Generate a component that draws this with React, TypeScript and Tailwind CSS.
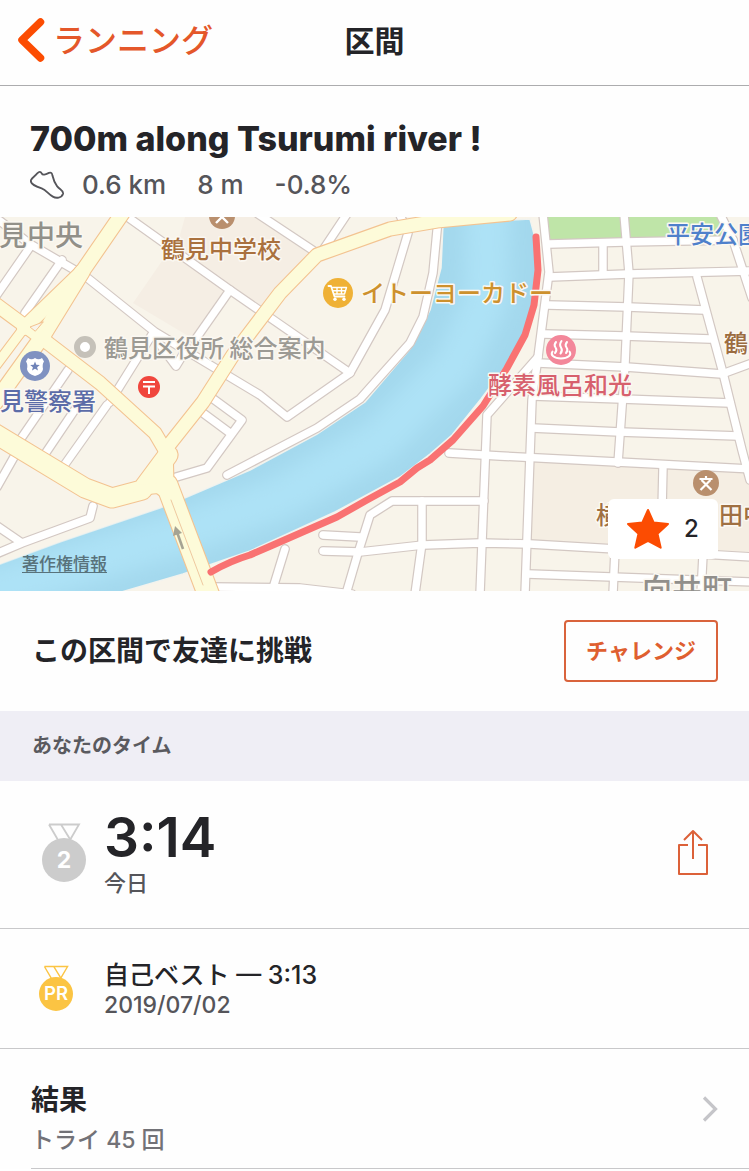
import React from "react";

const minorRoads: string[] = [
  "M0 221L30 244L85 276L155 332L260 395L287 417L350 373",
  "M122 213L230 290L350 373L385 310L408 233L400 215",
  "M230 290L195 340",
  "M30 247L-4 296",
  "M62 260L25 313",
  "M153 333L110 402",
  "M153 335L176 366L187 348",
  "M68 370L20 440",
  "M76 408L43 457",
  "M107 405L63 467",
  "M14 457L-3 487",
  "M93 506L90 518L22 543L-4 554M-3 526L22 543",
  "M173 478L207 468L242 420L212 398M203 413L230 433",
  "M227 475L250 463L317 428L360 399L410 343L423 317L433 273L438 220",
  "M258 214L317 253M347 214L323 250",
  "M543 214L549 272L538 357L532 400L525 594",
  "M538 357L487 415L480 594",
  "M624 214L629 273L625 365L618 463",
  "M720 214L733 240L752 298",
  "M697 277L723 373L742 450L750 480",
  "M549 244L624 242L733 240",
  "M549 277L628 274L752 271",
  "M548 305L628 307L704 310",
  "M544 334L625 336L710 339",
  "M538 363L626 367L722 374L752 363",
  "M533 396L622 399L730 403",
  "M532 428L620 432L738 436",
  "M449 453L500 456L617 462L752 469",
  "M323 551L360 552L423 545L480 543L530 544L752 557",
  "M528 574L752 582",
  "M663 467L661 552M615 550L613 594M703 555L701 594",
  "M603 244L603 274",
  "M323 535L360 537",
  "M484 501L392 501L370 515L358 553L346 594",
  "M422 501L422 543L415 594",
  "M285 549L273 588",
  "M212 587L300 588L352 594",
];

const majorRoads: { d: string; w: number }[] = [
  { d: "M124 211L82 272L24 328", w: 14 },
  { d: "M82 272L42 337L-6 404", w: 15 },
  { d: "M24 328L-6 368", w: 9 },
  { d: "M-6 303L40 337L100 383L155 433L165 450", w: 13 },
  { d: "M165 450L203 402L233 355L280 293L317 255L390 229L437 221L510 214", w: 13 },
  { d: "M-6 433L85 488L112 498L142 490L168 455", w: 19 },
  { d: "M138 490L158 488L168 495", w: 10 },
  { d: "M166 448L167 485L206 596", w: 13 },
  { d: "M167 485L209 596", w: 21 },
];

const waterPath =
  "M443 224L530 219L537 245L536 300L524 335L505 367L481 399L452 435L430 454L400 477L335 512L250 551L183 574L118 593L-2 593L-2 565L60 542L160 508L187 497L250 470L317 434L365 402L410 349L430 310L441 268Z";

function MapLabel({ x, y, fill, size = 24, children }: {
  x: number; y: number; fill: string; size?: number; children: React.ReactNode;
}) {
  return (
    <text x={x} y={y} fill={fill} fontSize={size} stroke="#fbf8f2" strokeWidth={3} strokeLinejoin="round" paintOrder="stroke" className="font-medium">
      {children}
    </text>
  );
}

function SegmentMap() {
  return (
    <svg
      viewBox="0 217 749 374"
      preserveAspectRatio="xMidYMid slice"
      role="img"
      aria-label="地図"
      className="block h-[374px] w-full font-['Noto_Sans_CJK_JP',sans-serif]"
    >
      <defs>
        <clipPath id="water"><path d={waterPath} /></clipPath>
        <filter id="soft" x="-20%" y="-20%" width="140%" height="140%"><feGaussianBlur stdDeviation="10" /></filter>
      </defs>
      <rect x="-400" y="217" width="1600" height="374" fill="#f8f4ea" />
      <path d="M185 217H255L317 256L281 290L262 312L230 290L195 340L133 303L180 235Z" fill="#f5eee4" />
      <path d="M533 461L663 467L752 472V556L530 543Z" fill="#f5eee3" />
      <path d="M547 217H622V239L549 243ZM628 217H722L732 237H629Z" fill="#bfe5a8" />

      <path d={waterPath} fill="#a3d8ed" stroke="#f3f3ee" strokeWidth="1.5" />
      <g clipPath="url(#water)">
        <path d="M488 205L486 300L455 365L380 440L280 498L190 530L-20 595" fill="none" stroke="#ade2f6" strokeWidth="44" filter="url(#soft)" />
      </g>

      <g fill="none" strokeLinecap="round" strokeLinejoin="round">
        <g stroke="#d3c8c3" strokeWidth="9.8">{minorRoads.map((d) => <path key={d} d={d} />)}</g>
        <g stroke="#fff" strokeWidth="7.4">{minorRoads.map((d) => <path key={d} d={d} />)}</g>
        <g stroke="#f3c391">{majorRoads.map((r) => <path key={r.d} d={r.d} strokeWidth={r.w + 2.2} />)}</g>
        <g stroke="#fdfbd9">{majorRoads.map((r) => <path key={r.d} d={r.d} strokeWidth={r.w} />)}</g>
        <path d="M43 322L30 327L35 331Z" fill="#f8f4ea" stroke="#f3c391" strokeWidth="1" />
        <path d="M171 500L203 585" stroke="#efc9a0" strokeWidth="1" />
        <path d="M183 549L177 532" stroke="#a5a393" strokeWidth="2.6" strokeLinecap="butt" />
        <path d="M175 526L173 536L182 533Z" fill="#a5a393" />
        <path d="M211 572Q230 561 250 555L273 545L337 517L367 500L400 482L417 468L430 460L453 440L483 406L507 368L525 335L534 305L538 270L536 237" stroke="#f97272" strokeWidth="7" />
      </g>

      <MapLabel x={-1} y={246} size={28} fill="#929089">見中央</MapLabel>
      <MapLabel x={161} y={258} fill="#aa713e">鶴見中学校</MapLabel>
      <MapLabel x={104} y={357} fill="#9c9a94">鶴見区役所 総合案内</MapLabel>
      <MapLabel x={0} y={410} fill="#5c6ca8">見警察署</MapLabel>
      <MapLabel x={361} y={302} fill="#cd912d">イトーヨーカドー</MapLabel>
      <MapLabel x={488} y={394} fill="#d7606d">酵素風呂和光</MapLabel>
      <MapLabel x={666} y={243} fill="#4f80cb">平安公園</MapLabel>
      <MapLabel x={724} y={352} fill="#9b6c41">鶴</MapLabel>
      <MapLabel x={596} y={524} fill="#a07042">横</MapLabel>
      <MapLabel x={719} y={524} fill="#a07042">田中</MapLabel>
      <MapLabel x={642} y={600} size={30} fill="#918f8b">向井町</MapLabel>

      <circle cx="222" cy="216" r="13" fill="#b98f6d" />
      <path d="M216 223L227 212M228 223L217 212" stroke="#fff" strokeWidth="2.4" />

      <circle cx="338" cy="293" r="15" fill="#efb136" />
      <g fill="none" stroke="#fff" strokeWidth="1.8" strokeLinecap="round" strokeLinejoin="round">
        <path d="M328.500 286H331L334.500 296.500H344.500" />
        <path d="M332.500 287.500H346.500L344.500 294H334M333.500 290.700H345.500M337 288V294M341.500 288V294" strokeWidth="1.4" />
      </g>
      <circle cx="335" cy="299.300" r="1.700" fill="#fff" />
      <circle cx="344" cy="299.300" r="1.700" fill="#fff" />

      <circle cx="85" cy="347" r="8" fill="#fff" stroke="#c5c1b9" strokeWidth="6" />

      <circle cx="35" cy="366" r="15" fill="#8092c1" />
      <path d="M28 358Q31.500 360.500 35 358Q38.500 360.500 42 358L44 361.500Q42 364 43 369Q42.500 374 35 376Q27.500 374 27 369Q28 364 26 361.500Z" fill="#fff" />
      <path d="M35 361.500L36.300 364.700L39.800 365L37.100 367.200L38 370.500L35 368.700L32 370.500L32.900 367.200L30.200 365L33.700 364.700Z" fill="#6f83b8" />

      <circle cx="149" cy="387" r="11" fill="#f0463d" />
      <path d="M143 382H155M143 386.500H155M149 386.500V394" stroke="#fff" strokeWidth="2" fill="none" />

      <circle cx="561" cy="350" r="15" fill="#f3879a" />
      <g fill="none" stroke="#fff" strokeWidth="2" strokeLinecap="round">
        <path d="M556 342Q553.500 345 555.500 347.500T555 353M561.500 341Q559 344.500 561 347.500T560.500 353.500M567 342Q564.500 345 566.500 347.500T566 353" />
        <path d="M552.500 351.500C550 355 554 358.500 561 358.500S572 355 569.500 351.500" />
      </g>

      <circle cx="706" cy="483" r="13" fill="#b98f6d" />
      <path d="M699.500 479H712.500M706 476V479M701.500 480L711.500 490M710.500 480L700.500 490" stroke="#fff" strokeWidth="2.200" fill="none" />
    </svg>
  );
}

function Medal({ label, className, labelClass }: { label: string; className: string; labelClass: string }) {
  return (
    <svg viewBox="0 0 44 60" className={className} role="img" aria-label={label}>
      <g fill="none" stroke="currentColor" strokeWidth="1.8">
        <path d="M7 1.500H37L28 17M7 1.500L16 17M19 1.500L28.500 17" />
      </g>
      <circle cx="22" cy="37" r="22" fill="currentColor" />
      <text x="22" y="45" textAnchor="middle" fill="#fff" className={labelClass}>{label}</text>
    </svg>
  );
}

export default function App() {
  return (
    <div className="w-full bg-[#fefefe] font-['Inter','Noto_Sans_CJK_JP',sans-serif] text-[#242428]">
      <header className="grid h-[86px] grid-cols-[1fr_auto_1fr] items-center border-b border-[#acacae] px-4 pb-1">
        <a href="#running" className="flex items-center gap-2 text-[32px] leading-10 font-medium text-[#e4572a]">
          <svg viewBox="0 0 29 46" className="h-[46px] w-[29px]" fill="none" aria-hidden="true">
            <path d="M24.500 4L6 22L24.500 40" stroke="#fc4c02" strokeWidth="7.500" strokeLinecap="round" strokeLinejoin="round" />
          </svg>
          ランニング
        </a>
        <h1 className="text-[30px] leading-10 font-bold">区間</h1>
      </header>

      <main>
        <section className="flex h-[131px] flex-col px-[30px] pt-8">
          <h2 className="text-[34px] leading-[42px] font-extrabold">700m along Tsurumi river !</h2>
          <div className="mt-1 flex items-center text-[26px] leading-[42px] font-medium text-[#55555a]">
            <svg viewBox="0 0 36 30" className="mr-[17px] h-[30px] w-[35px]" fill="none" stroke="currentColor" strokeWidth="1.900" strokeLinejoin="round" aria-hidden="true">
              <path d="M7.500 3C9.500 0.800 11 1 12 3C13 5.300 15.500 4.500 19.500 2.500C22 1.800 22.800 3 23 5C24 9.500 25.500 13 28 16.500C31 20 34.500 20.500 34 24C32.500 28.500 27 29 23.500 27C19 24.500 17 20.500 12 18.500C6 16.500 0.500 14.500 0.800 10.500C1.500 7.500 5.500 6 7.500 3Z" />
            </svg>
            <ul className="flex gap-[31px]">
              <li>0.6 km</li>
              <li>8 m</li>
              <li>-0.8%</li>
            </ul>
          </div>
        </section>

        <section className="relative overflow-hidden">
          <SegmentMap />
          <a href="#legal" className="absolute bottom-[15px] left-[22px] text-[17px] leading-6 font-medium text-[#58727b] underline underline-offset-2">著作権情報</a>
          <button type="button" aria-label="お気に入り 2" className="absolute right-[31px] bottom-8 flex h-[60px] w-[110px] items-center gap-[14px] rounded-md bg-white pl-[18px] text-[24px] font-medium">
            <svg viewBox="0 0 44 42" className="h-[42px] w-[44px]" aria-hidden="true">
              <path d="M22 2L27.700 14.600L42 16L31.500 25.700L34.700 39.700L22 32.800L9.300 39.700L12.500 25.700L2 16L16.300 14.600Z" fill="#fc4c02" stroke="#fc4c02" strokeWidth="2" strokeLinejoin="round" />
            </svg>
            2
          </button>
        </section>

        <section className="flex h-[120px] items-center justify-between pr-[31px] pl-8">
          <h3 className="text-[28px] leading-10 font-bold">この区間で友達に挑戦</h3>
          <button type="button" className="h-[62px] w-[154px] rounded-sm border-2 border-[#d9633c] text-[22px] font-bold text-[#df5f30]">チャレンジ</button>
        </section>

        <h3 className="flex h-[70px] items-center bg-[#efeef5] px-8 text-[20px] font-bold text-[#5a5a5f]">あなたのタイム</h3>

        <section className="flex h-[148px] items-center border-b border-[#c8c8ca] pr-10 pb-1 pl-[42px]">
          <Medal label="2" className="h-[60px] w-11 text-[#cccccc]" labelClass="text-[23px] font-bold" />
          <div className="ml-[18px] flex-1">
            <p className="text-[55px] leading-[60px] font-semibold">3:14</p>
            <p className="text-[22px] leading-8 font-medium text-[#55555a]">今日</p>
          </div>
          <button type="button" aria-label="共有">
            <svg viewBox="0 0 32 48" className="h-12 w-8" fill="none" stroke="#dc6139" strokeWidth="2" strokeLinejoin="round" aria-hidden="true">
              <path d="M11 16H2V45H30V16H21M16 30V2M7 11L16 2L25 11" />
            </svg>
          </button>
        </section>

        <section className="flex h-[120px] items-center border-b border-[#c8c8ca] pr-10 pl-[39px]">
          <Medal label="PR" className="h-[47px] w-[34px] text-[#fbc443]" labelClass="text-[24px] font-semibold" />
          <div className="ml-[31px]">
            <p className="text-[25px] leading-8 font-medium">自己ベスト — 3:13</p>
            <p className="text-[23px] leading-7 font-medium text-[#55555a]">2019/07/02</p>
          </div>
        </section>

        <a href="#results" className="ml-[31px] flex h-[120px] items-center justify-between border-b border-[#c8c8ca] pr-[31px]">
          <div className="pt-[22px]">
            <p className="text-[28px] leading-10 font-bold">結果</p>
            <p className="text-[23px] leading-10 font-medium text-[#727277]">トライ 45 回</p>
          </div>
          <svg viewBox="0 0 16 26" className="h-[26px] w-4" fill="none" stroke="#c5c5c9" strokeWidth="3.200" aria-hidden="true">
            <path d="M2 1.500L13.500 13L2 24.500" />
          </svg>
        </a>
      </main>
    </div>
  );
}
